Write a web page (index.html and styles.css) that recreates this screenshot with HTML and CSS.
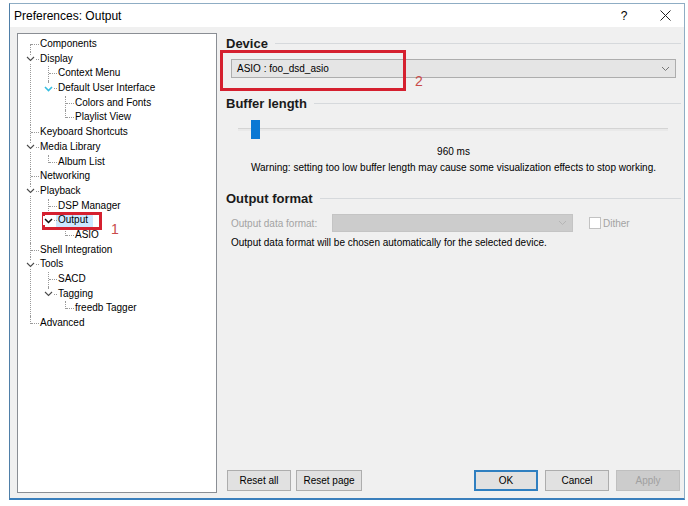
FILE: index.html
```html
<!DOCTYPE html>
<html lang="en">
<head>
    <meta charset="UTF-8">
    <title>Preferences: Output</title>
    <link rel="stylesheet" href="styles.css">
</head>
<body>
    <div class="window">
        <div class="titlebar">
            <span class="title">Preferences: Output</span>
            <span class="caption-btn help">?</span>
            <span class="caption-btn close">
                <svg width="11" height="11" viewBox="0 0 11 11"><path d="M0.5 0.5 L10.5 10.5 M10.5 0.5 L0.5 10.5" stroke="#222" stroke-width="1" fill="none"/></svg>
            </span>
        </div>

        <div class="client">
            <div class="tree">
                <ul class="tree-list root">
                    <li><div class="node">Components</div></li>
                    <li>
                        <span class="exp"><svg width="9" height="6" viewBox="0 0 9 6"><path d="M1 1 L4.5 4.5 L8 1" /></svg></span>
                        <div class="node">Display</div>
                        <ul>
                            <li><div class="node">Context Menu</div></li>
                            <li class="last">
                                <span class="exp hot"><svg width="9" height="6" viewBox="0 0 9 6"><path d="M1 1 L4.5 4.5 L8 1" /></svg></span>
                                <div class="node">Default User Interface</div>
                                <ul>
                                    <li><div class="node">Colors and Fonts</div></li>
                                    <li class="last"><div class="node">Playlist View</div></li>
                                </ul>
                            </li>
                        </ul>
                    </li>
                    <li><div class="node">Keyboard Shortcuts</div></li>
                    <li>
                        <span class="exp"><svg width="9" height="6" viewBox="0 0 9 6"><path d="M1 1 L4.5 4.5 L8 1" /></svg></span>
                        <div class="node">Media Library</div>
                        <ul>
                            <li class="last"><div class="node">Album List</div></li>
                        </ul>
                    </li>
                    <li><div class="node">Networking</div></li>
                    <li>
                        <span class="exp"><svg width="9" height="6" viewBox="0 0 9 6"><path d="M1 1 L4.5 4.5 L8 1" /></svg></span>
                        <div class="node">Playback</div>
                        <ul>
                            <li><div class="node">DSP Manager</div></li>
                            <li class="last">
                                <span class="exp dark"><svg width="9" height="6" viewBox="0 0 9 6"><path d="M1 1 L4.5 4.5 L8 1" /></svg></span>
                                <div class="node"><span class="selected">Output</span></div>
                                <ul>
                                    <li class="last"><div class="node">ASIO</div></li>
                                </ul>
                            </li>
                        </ul>
                    </li>
                    <li><div class="node">Shell Integration</div></li>
                    <li>
                        <span class="exp"><svg width="9" height="6" viewBox="0 0 9 6"><path d="M1 1 L4.5 4.5 L8 1" /></svg></span>
                        <div class="node">Tools</div>
                        <ul>
                            <li><div class="node">SACD</div></li>
                            <li class="last">
                                <span class="exp"><svg width="9" height="6" viewBox="0 0 9 6"><path d="M1 1 L4.5 4.5 L8 1" /></svg></span>
                                <div class="node">Tagging</div>
                                <ul>
                                    <li class="last"><div class="node">freedb Tagger</div></li>
                                </ul>
                            </li>
                        </ul>
                    </li>
                    <li class="last"><div class="node">Advanced</div></li>
                </ul>
            </div>

            <div class="page">
                <div class="group-title">Device</div>
                <div class="combo">
                    <span>ASIO : foo_dsd_asio</span>
                    <svg width="9" height="6" viewBox="0 0 9 6"><path d="M1 1 L4.5 4.5 L8 1" stroke="#777" fill="none"/></svg>
                </div>

                <div class="group-title buffer">Buffer length</div>
                <div class="slider"><div class="thumb"></div></div>
                <div class="ms">960 ms</div>
                <div class="warning">Warning: setting too low buffer length may cause some visualization effects to stop working.</div>

                <div class="group-title format">Output format</div>
                <div class="format-row">
                    <span class="format-label">Output data format:</span>
                    <span class="combo disabled">
                        <svg width="9" height="6" viewBox="0 0 9 6"><path d="M1 1 L4.5 4.5 L8 1" stroke="#b5b5b5" fill="none"/></svg>
                    </span>
                    <span class="checkbox"></span>
                    <span class="dither">Dither</span>
                </div>
                <div class="note">Output data format will be chosen automatically for the selected device.</div>

                <div class="buttons">
                    <button>Reset all</button>
                    <button class="wide">Reset page</button>
                    <div class="dialog-buttons">
                        <button class="default">OK</button>
                        <button>Cancel</button>
                        <button disabled>Apply</button>
                    </div>
                </div>
            </div>
        </div>

        <!-- red annotation marks drawn over the dialog -->
        <div class="mark mark-output"></div>
        <div class="mark-num num-1">1</div>
        <div class="mark mark-device"></div>
        <div class="mark-num num-2">2</div>
    </div>
</body>
</html>
```

FILE: styles.css
```css
body {
    margin: 0;
    background-color: #fff;
    font-family: "Liberation Sans", Arial, sans-serif;
    color: #000;
}
.window {
    position: relative;
    margin: 3px 0 0 9px;
    width: 674px;
    height: 494px;
    border: 1px solid #8fadc4;
    border-left-color: #4f7fa8;
    border-bottom: 2px solid #3a7fbc;
}
.titlebar {
    height: 23px;
    display: flex;
    align-items: center;
    background-color: #fff;
}
.title {
    padding-left: 4px;
    font-size: 12px;
}
.caption-btn {
    width: 38px;
    height: 23px;
    display: flex;
    align-items: center;
    justify-content: center;
    font-size: 12px;
}
.help {
    margin-left: auto;
    margin-right: 3px;
}
.client {
    height: 471px;
    display: flex;
    align-items: flex-start;
    background-color: #f0f0f0;
}

/* tree view */
.tree {
    box-sizing: border-box;
    flex-shrink: 0;
    width: 200px;
    height: 460px;
    margin: 6px 0 0 7px;
    padding-top: 3px;
    background-color: #fff;
    border: 1px solid #8a8e94;
}
.tree-list, .tree-list ul {
    list-style: none;
    margin: 0;
    padding: 0;
}
.tree-list {
    padding-left: 12px;
}
.tree-list ul {
    margin-left: 8px;
}
.tree-list ul ul {
    margin-left: 7px;
}
.tree-list li {
    position: relative;
    padding-left: 10px;
}
.tree-list li::before {
    content: "";
    position: absolute;
    left: 0;
    top: 0;
    bottom: 0;
    border-left: 1px dotted #9a9a9a;
}
.tree-list li.last::before {
    bottom: auto;
    height: 8px;
}
.root > li:first-child::before {
    top: 7px;
}
.tree-list li::after {
    content: "";
    position: absolute;
    left: 1px;
    top: 7px;
    width: 8px;
    border-top: 1px dotted #9a9a9a;
}
.node {
    height: 14.7px;
    line-height: 14.7px;
    font-size: 10px;
    white-space: nowrap;
}
.selected {
    display: inline-block;
    margin-left: -2px;
    padding: 0 5px 0 2px;
    background-color: #cce8ff;
}
.exp {
    position: absolute;
    left: -5px;
    top: 3px;
    width: 10px;
    height: 9px;
    display: flex;
    align-items: center;
    justify-content: center;
    background-color: #fff;
    z-index: 1;
}
.exp path {
    fill: none;
    stroke: #4a4a4a;
    stroke-width: 1.1;
}
.exp.hot path {
    stroke: #35bde0;
    stroke-width: 1.6;
}
.exp.dark path {
    stroke: #111;
    stroke-width: 1.5;
}

/* right page */
.page {
    box-sizing: border-box;
    flex: 1;
    min-width: 0;
    height: 471px;
    display: flex;
    flex-direction: column;
    padding: 8px 3px 7px 9px;
    font-size: 10px;
}
.group-title {
    display: flex;
    align-items: center;
    height: 16px;
    font-size: 13px;
    font-weight: bold;
    color: #1a1a1a;
}
.group-title::after {
    content: "";
    flex: 1;
    margin-left: 7px;
    border-top: 1px solid #d6d9dc;
}
.group-title.buffer {
    margin-top: 17px;
}
.group-title.format {
    margin-top: 14px;
}
.combo {
    box-sizing: border-box;
    height: 19px;
    margin: 8px 5px 0;
    padding: 0 5px 0 5px;
    display: flex;
    align-items: center;
    justify-content: space-between;
    background-color: #e5e5e5;
    border: 1px solid #adadad;
}
.slider {
    height: 19px;
    margin: 9px 13px 0 12px;
    display: flex;
    align-items: center;
    background:
        linear-gradient(#d4d4d4, #d4d4d4) 0 8px / 100% 1px no-repeat,
        linear-gradient(#e9e9e9, #e9e9e9) 0 9px / 100% 2px no-repeat;
}
.thumb {
    width: 9px;
    height: 19px;
    margin-left: 13px;
    background-color: #0a78d4;
}
.ms {
    margin-top: 5px;
    line-height: 16px;
    text-align: center;
}
.warning {
    line-height: 16px;
    text-align: center;
}
.format-row {
    height: 18px;
    margin-top: 8px;
    padding-left: 5px;
    display: flex;
    align-items: center;
}
.format-row > * {
    flex-shrink: 0;
}
.format-label {
    width: 101px;
    color: #a3a3a3;
}
.dither {
    color: #a3a3a3;
}
.combo.disabled {
    width: 241px;
    height: 18px;
    margin: 0;
    justify-content: flex-end;
    background-color: #cccccc;
    border-color: #c4c4c4;
}
.checkbox {
    box-sizing: border-box;
    width: 12px;
    height: 12px;
    margin: 0 2px 0 16px;
    background-color: #fff;
    border: 1px solid #c2c2c2;
}
.note {
    margin-top: 3px;
    padding-left: 5px;
    line-height: 16px;
}
.buttons {
    margin-top: auto;
    padding-left: 1px;
    display: flex;
    gap: 5px;
}
.dialog-buttons {
    margin-left: auto;
    margin-right: 1px;
    display: flex;
    gap: 7px;
}
button {
    box-sizing: border-box;
    width: 64px;
    height: 21px;
    padding: 0;
    font-family: "Liberation Sans", Arial, sans-serif;
    font-size: 10px;
    color: #000;
    background-color: #e1e1e1;
    border: 1px solid #adadad;
}
button.wide {
    width: 66px;
}
button.default {
    border: 2px solid #2f7fc0;
}
button:disabled {
    color: #a0a0a0;
    background-color: #cccccc;
    border-color: #bfbfbf;
}

/* red annotation marks */
.mark {
    position: absolute;
    box-sizing: border-box;
    border: 3px solid #d5202f;
}
.mark-output {
    left: 32px;
    top: 208px;
    width: 60px;
    height: 18px;
}
.mark-device {
    left: 210px;
    top: 46px;
    width: 186px;
    height: 41px;
}
.mark-num {
    position: absolute;
    font-size: 14px;
    color: #c94a4a;
}
.num-1 {
    left: 101px;
    top: 217px;
}
.num-2 {
    left: 405px;
    top: 69px;
}
```
